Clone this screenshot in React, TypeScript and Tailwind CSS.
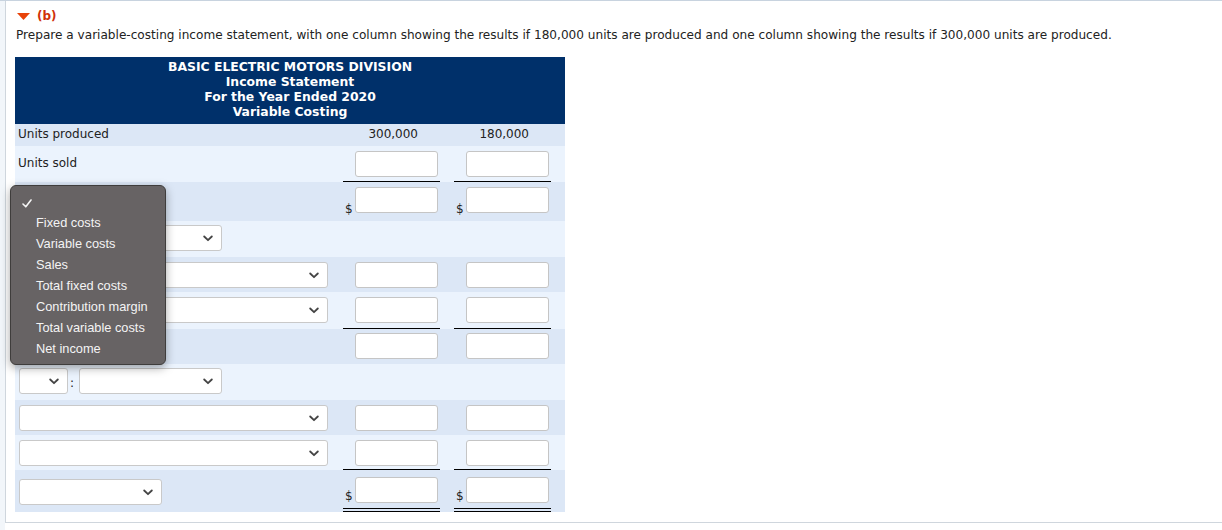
import React from "react";

const DARK = "bg-[#dce7f6]";
const LIGHT = "bg-[#ebf3fd]";

function Chevron() {
  return (
    <svg width="10" height="7" viewBox="0 0 10 7" className="shrink-0">
      <path d="M1.2 1.5 L5 5.2 L8.8 1.5" fill="none" stroke="#444" strokeWidth="1.8" strokeLinecap="round" strokeLinejoin="round" />
    </svg>
  );
}

function Select({ w }: { w: string }) {
  return (
    <div className={`${w} h-[26px] bg-white border border-[#c9c9c9] rounded-[3px] flex items-center justify-end pr-[8px]`}>
      <Chevron />
    </div>
  );
}

function Input() {
  return <div className="w-[83px] h-[26px] bg-white border border-[#c5c5c5] rounded-[3px] shrink-0" />;
}

type Line = "none" | "single" | "double";

function NumCell({ dollar, line, pt }: { dollar?: boolean; line: Line; pt: string }) {
  const lineCls =
    line === "single"
      ? "border-b border-black"
      : line === "double"
      ? "border-b-[4px] border-double border-black"
      : "";
  return (
    <div className={`w-[97px] h-full flex items-start ${pt} ${lineCls}`}>
      {dollar ? (
        <span className="w-[12px] pl-[2px] self-stretch flex items-end pb-[6px] text-[12px] leading-none text-[#222]">
          $
        </span>
      ) : (
        <span className="w-[12px] shrink-0" />
      )}
      <Input />
    </div>
  );
}

function Row({
  h,
  bg,
  left,
  nums,
  dollar,
  line = "none",
  pt = "pt-[5px]",
}: {
  h: string;
  bg: string;
  left?: React.ReactNode;
  nums?: boolean;
  dollar?: boolean;
  line?: Line;
  pt?: string;
}) {
  return (
    <div className={`flex w-[550px] ${h} ${bg}`}>
      <div className="w-[328px] h-full flex items-start">{left}</div>
      {nums ? (
        <>
          <NumCell dollar={dollar} line={line} pt={pt} />
          <div className="w-[14px]" />
          <NumCell dollar={dollar} line={line} pt={pt} />
        </>
      ) : null}
    </div>
  );
}

export default function App() {
  const items = [
    "Fixed costs",
    "Variable costs",
    "Sales",
    "Total fixed costs",
    "Contribution margin",
    "Total variable costs",
    "Net income",
  ];
  return (
    <div
      className="w-[1222px] h-[530px] flex bg-white text-[#222] relative overflow-hidden"
      style={{ fontFamily: "Verdana, 'DejaVu Sans', sans-serif" }}
    >
      <div className="absolute top-0 left-0 w-full h-px bg-[#c8d3df]" />
      <div className="w-[5px] h-full bg-[#f2f6fa] shrink-0" />
      <div className="h-[523px] flex-1 border-l border-b border-[#cfd6dd] pl-[9px] pt-[9px]">
        <div className="flex items-center gap-[7px] pl-[2px] h-[14px]">
          <svg width="13" height="7" viewBox="0 0 13 7">
            <path d="M0 0 H13 L6.5 7 Z" fill="#e8430a" />
          </svg>
          <span className="text-[12px] font-bold text-[#d0310a] leading-none">(b)</span>
        </div>
        <div className="mt-[5px] pl-[1px] text-[12.1px] leading-[15px] text-[#222]">
          Prepare a variable-costing income statement, with one column showing the results if 180,000 units are produced and one column showing the results if 300,000 units are produced.
        </div>

        <div className="mt-[14px] w-[550px]">
          <div className="w-[550px] h-[67px] bg-[#00306a] flex">
            <div className="w-[550px] pt-[2px] text-center text-white font-bold text-[12.4px] leading-[15px]">
              <div>BASIC ELECTRIC MOTORS DIVISION</div>
              <div>Income Statement</div>
              <div>For the Year Ended 2020</div>
              <div>Variable Costing</div>
            </div>
          </div>

          <div className={`flex w-[550px] h-[22px] ${DARK} items-center text-[12px] pb-[3px]`}>
            <div className="w-[328px] pl-[3px]">Units produced</div>
            <div className="w-[97px] text-right pr-[22px]">300,000</div>
            <div className="w-[14px]" />
            <div className="w-[97px] text-right pr-[22px]">180,000</div>
          </div>

          <Row
            h="h-[36px]"
            bg={LIGHT}
            nums
            line="single"
            left={<div className="pl-[3px] pt-[8px] text-[12px]">Units sold</div>}
          />
          <Row h="h-[39px]" bg={DARK} nums dollar />
          <Row
            h="h-[36px]"
            bg={LIGHT}
            left={
              <div className="pl-[5px] pt-[4px]">
                <Select w="w-[202px]" />
              </div>
            }
          />
          <Row
            h="h-[35px]"
            bg={DARK}
            nums
            left={
              <div className="pl-[4px] pt-[5px]">
                <Select w="w-[309px]" />
              </div>
            }
          />
          <Row
            h="h-[37px]"
            bg={LIGHT}
            nums
            line="single"
            left={
              <div className="pl-[4px] pt-[5px]">
                <Select w="w-[309px]" />
              </div>
            }
          />
          <Row h="h-[35px]" bg={DARK} nums pt="pt-[4px]" />
          <Row
            h="h-[36px]"
            bg={LIGHT}
            left={
              <div className="pl-[4px] pt-[4px] flex items-start">
                <Select w="w-[49px]" />
                <span className="w-[11px] text-[12px] pt-[9px] pl-[2px] leading-none">:</span>
                <Select w="w-[143px]" />
              </div>
            }
          />
          <Row
            h="h-[35px]"
            bg={DARK}
            nums
            left={
              <div className="pl-[4px] pt-[5px]">
                <Select w="w-[309px]" />
              </div>
            }
          />
          <Row
            h="h-[35px]"
            bg={LIGHT}
            nums
            line="single"
            left={
              <div className="pl-[4px] pt-[5px]">
                <Select w="w-[309px]" />
              </div>
            }
          />
          <Row
            h="h-[42px]"
            bg={DARK}
            nums
            dollar
            line="double"
            pt="pt-[7px]"
            left={
              <div className="pl-[4px] pt-[9px]">
                <Select w="w-[143px]" />
              </div>
            }
          />
        </div>
      </div>

      <div
        className="absolute left-[10px] top-[185px] w-[156px] h-[180px] rounded-[6px] bg-[#676364] border border-[#3f3d3c] shadow-[0_3px_10px_rgba(0,0,0,0.35)] pt-[7px]"
        style={{ fontFamily: "'Liberation Sans', Arial, sans-serif" }}
      >
        <div className="h-[20px] pl-[11px] flex items-center text-[#f2f2f2] text-[12px]">
          <svg width="10" height="9" viewBox="0 0 10 9">
            <path d="M1 5 L3.8 7.8 L9 1" fill="none" stroke="#f5f5f5" strokeWidth="1.6" strokeLinecap="round" strokeLinejoin="round" />
          </svg>
        </div>
        {items.map((t) => (
          <div key={t} className="h-[21px] pl-[25px] flex items-center text-[12.8px] text-[#f4f4f4] leading-none">
            {t}
          </div>
        ))}
      </div>
    </div>
  );
}
